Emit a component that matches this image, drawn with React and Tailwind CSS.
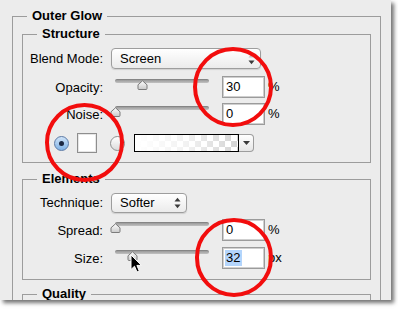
import React from "react";

function Legend({ children }) {
  return (
    <legend className="ml-[14px] px-[5px] text-[13px] font-bold leading-[16px] text-black">
      {children}
    </legend>
  );
}

function Label({ children, pt }) {
  return (
    <div className={"w-[80px] shrink-0 text-right text-[13px] leading-[16px] text-black " + pt}>
      {children}
    </div>
  );
}

function Thumb({ pos }) {
  return (
    <svg
      className={"absolute top-0 " + pos}
      width="11"
      height="10"
      viewBox="0 0 11 10"
    >
      <defs>
        <linearGradient id="tg" x1="0" y1="0" x2="0" y2="1">
          <stop offset="0" stopColor="#ffffff" />
          <stop offset="1" stopColor="#c9c9c9" />
        </linearGradient>
      </defs>
      <path
        d="M1 4.8 L5.5 0.8 L10 4.8 L10 8.5 Q10 9.5 9 9.5 L2 9.5 Q1 9.5 1 8.5 Z"
        fill="url(#tg)"
        stroke="#7b7b7b"
        strokeWidth="1"
      />
    </svg>
  );
}

function Slider({ pos }) {
  return (
    <div className="ml-[12px] w-[94px] shrink-0 pt-[3px]">
      <div className="relative h-[4px] rounded-full border-t border-[#858585] bg-linear-to-b from-[#9a9a9a] to-[#c2c2c2]">
        <Thumb pos={pos} />
      </div>
    </div>
  );
}

function NumInput({ value, selected }) {
  return (
    <div className="ml-[13px] flex h-[22px] w-[43px] shrink-0 items-center border border-[#9b9b9b] bg-white pl-[2px] text-[13px] leading-[16px] text-black shadow-[inset_0_0_0_1px_#cfcfcf]">
      {selected ? (
        <span className="bg-[#b4d5fc] pl-[1px] pr-[2px]">{value}</span>
      ) : (
        <span className="pl-[1px]">{value}</span>
      )}
    </div>
  );
}

function Unit({ children }) {
  return (
    <div className="ml-[3px] pt-[3px] text-[13px] leading-[16px] text-black">{children}</div>
  );
}

function SliderRow({ label, pos, value, unit, selected, mt }) {
  return (
    <div className={"flex h-[22px] items-start " + mt}>
      <Label pt="pt-[4px]">{label}</Label>
      <Slider pos={pos} />
      <NumInput value={value} selected={selected} />
      <Unit>{unit}</Unit>
    </div>
  );
}

function Popup({ children, w, h, both }) {
  return (
    <div
      className={
        "ml-[8px] flex shrink-0 items-center justify-between rounded-[4px] border border-[#9d9d9d] bg-linear-to-b from-white to-[#ebebeb] pl-[8px] pr-[5px] text-[13px] leading-[16px] text-black shadow-[0_1px_1px_rgba(0,0,0,0.12)] " +
        w +
        " " +
        h
      }
    >
      <span>{children}</span>
      <svg width="7" height="12" viewBox="0 0 7 12">
        <path d="M0.5 4.5 L3.5 0.8 L6.5 4.5 Z" fill={both ? "#3a3a3a" : "#c4c4c4"} />
        <path d="M0.5 7.5 L3.5 11.2 L6.5 7.5 Z" fill="#3a3a3a" />
      </svg>
    </div>
  );
}

export default function App() {
  return (
    <div className="h-[310px] w-[398px] bg-white font-['Liberation_Sans',Arial,sans-serif]">
      <div className="relative h-[300px] w-[391px] overflow-hidden bg-[#ececec] pt-[8px] shadow-[3px_3px_4px_rgba(0,0,0,0.55)]">
        <fieldset className="ml-[12px] w-[369px] border border-[#9c9c9c] pb-[60px]">
          <Legend>Outer Glow</Legend>

          {/* Structure */}
          <fieldset className="mx-[9px] mt-[2px] border border-[#9c9c9c]">
            <Legend>Structure</Legend>
            <div className="flex flex-col pb-[9px] pt-[6px]">
              <div className="flex h-[21px] items-start">
                <Label pt="pt-[3px]">Blend Mode:</Label>
                <Popup w="w-[150px]" h="h-[21px]">Screen</Popup>
              </div>
              <SliderRow mt="mt-[7px]" label="Opacity:" pos="left-[22px]" value="30" unit="%" />
              <SliderRow mt="mt-[5px]" label="Noise:" pos="left-[-5px]" value="0" unit="%" />
              <div className="mt-[8px] flex h-[20px] items-center">
                <div className="ml-[31px] flex h-[15px] w-[15px] items-center justify-center rounded-full border border-[#5b7aa6] bg-linear-to-b from-[#cfe3f7] to-[#7fb2e6]">
                  <div className="h-[5px] w-[5px] rounded-full bg-[#1b2741]" />
                </div>
                <div className="ml-[8px] h-[20px] w-[20px] border border-[#8e8e8e] bg-white shadow-[inset_0_0_0_1px_#e6e6e6]" />
                <div className="ml-[13px] h-[15px] w-[15px] rounded-full border border-[#8f8f8f] bg-linear-to-b from-white to-[#dcdcdc]" />
                <div className="ml-[9px] h-[18px] w-[105px] border border-black bg-[conic-gradient(#d4d4d4_25%,#ffffff_0_50%,#d4d4d4_0_75%,#ffffff_0)] bg-[length:12px_12px]">
                  <div className="h-full w-full bg-linear-to-r from-white via-white/70 to-transparent" />
                </div>
                <div className="flex h-[18px] w-[15px] items-center justify-center rounded-r-[4px] border border-l-0 border-[#9d9d9d] bg-linear-to-b from-white to-[#e6e6e6]">
                  <svg width="7" height="4" viewBox="0 0 7 4">
                    <path d="M0 0 L7 0 L3.5 4 Z" fill="#3a3a3a" />
                  </svg>
                </div>
              </div>
            </div>
          </fieldset>

          {/* Elements */}
          <fieldset className="mx-[9px] mt-[8px] border border-[#9c9c9c]">
            <Legend>Elements</Legend>
            <div className="flex flex-col pb-[10px] pt-[6px]">
              <div className="flex h-[20px] items-start">
                <Label pt="pt-[2px]">Technique:</Label>
                <Popup w="w-[76px]" h="h-[20px]" both>
                  Softer
                </Popup>
              </div>
              <SliderRow mt="mt-[6px]" label="Spread:" pos="left-[-5px]" value="0" unit="%" />
              <SliderRow mt="mt-[6px]" label="Size:" pos="left-[12px]" value="32" unit="px" selected />
            </div>
          </fieldset>

          {/* Quality */}
          <fieldset className="mx-[9px] mt-[6px] border border-[#9c9c9c]">
            <Legend>Quality</Legend>
            <div className="h-[40px]" />
          </fieldset>
        </fieldset>

        {/* annotation circles */}
        <div className="absolute left-[193px] top-[47px] h-[80px] w-[80px] rounded-full border-[4px] border-[#f20d0d]" />
        <div className="absolute left-[45px] top-[103px] h-[79px] w-[79px] rounded-full border-[4px] border-[#f20d0d]" />
        <div className="absolute left-[195px] top-[218px] h-[79px] w-[78px] rounded-full border-[4px] border-[#f20d0d]" />

        {/* mouse cursor */}
        <svg className="absolute left-[130px] top-[254px]" width="13" height="20" viewBox="0 0 13 20">
          <path
            d="M1 1 L1 15.5 L4.5 12.2 L7 18 L9.3 17 L6.9 11.4 L11.5 11.4 Z"
            fill="#000"
            stroke="#fff"
            strokeWidth="1"
            strokeLinejoin="round"
          />
        </svg>
      </div>
    </div>
  );
}
